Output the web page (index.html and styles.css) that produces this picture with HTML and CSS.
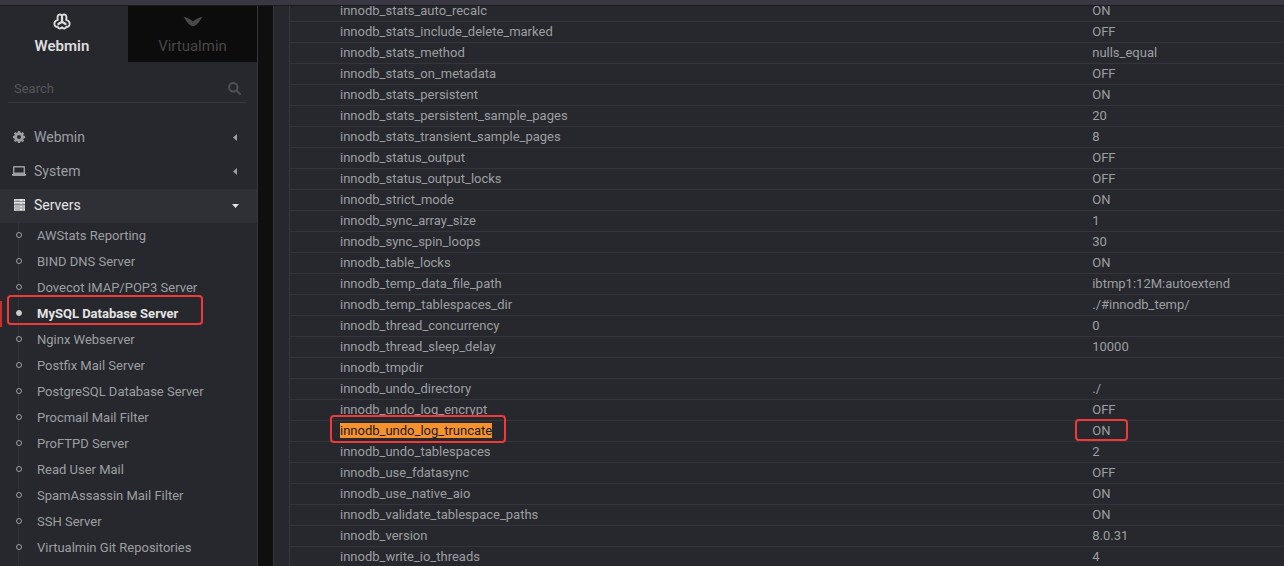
FILE: index.html
```html
<!DOCTYPE html>
<html lang="en">

<head>
  <meta charset="UTF-8">
  <meta name="viewport" content="width=device-width, initial-scale=1.0">
  <title>Webmin - MySQL Database Server</title>
  <link rel="stylesheet" href="styles.css">
</head>

<body>
  <div class="topbar"></div>
  <div class="layout">
    <aside class="sidebar">
      <div class="tabs">
        <a href="#" class="tab active">
          <svg class="tab-icon" viewBox="0 0 20 18" fill="none" stroke="currentColor" stroke-width="2" stroke-linecap="round" stroke-linejoin="round">
            <path d="M10 2.800C9 1 6 1.200 5.400 3.400C5 5 5.400 6.200 5.600 7.200C3 8 1.600 10 2 12.200C2.600 14.800 4.400 15 5.400 14.400C6 17 9 17 10 15C11 17 14 17 14.600 14.400C15.600 15 17.400 14.800 18 12.200C18.400 10 17 8 14.400 7.200C14.600 6.200 15 5 14.600 3.400C14 1.200 11 1 10 2.800Z" />
            <path stroke-width="2.400" d="M10 4V9.200M10 9.200L6.200 11.600M10 9.200L13.800 11.600" />
          </svg>
          <span>Webmin</span>
        </a>
        <a href="#" class="tab">
          <svg class="tab-icon" viewBox="0 0 20 18" fill="currentColor">
            <path d="M0 4C4 5 7 6.400 10 9C13 6.400 16 5 20 4C17.500 8.500 14.500 12.500 12 13.600Q10 14.400 8 13.600C5.500 12.500 2.500 8.500 0 4Z" />
          </svg>
          <span>Virtualmin</span>
        </a>
      </div>
      <form class="search">
        <input type="text" placeholder="Search" aria-label="Search">
        <button type="submit" aria-label="Search">
          <svg viewBox="0 0 13 13" fill="none" stroke="currentColor" stroke-width="2">
            <circle cx="5.300" cy="5.300" r="4.200" />
            <path d="M8.400 8.400L12 12" stroke-linecap="round" />
          </svg>
        </button>
      </form>
      <nav>
        <a href="#" class="nav-item">
          <svg class="nav-icon" viewBox="0 0 14 14" fill="currentColor">
            <path fill-rule="evenodd" d="M5.900 1h2.200l.3 1.600 1 .4 1.300-.9 1.400 1.400-.9 1.300.4 1 1.500.2v2.100l-1.500.3-.4 1 .9 1.300-1.400 1.400-1.300-.9-1 .4-.3 1.500H5.900l-.3-1.500-1-.4-1.300.9-1.400-1.400.9-1.300-.4-1L.9 8.100V6l1.500-.2.4-1-.9-1.300 1.400-1.400 1.300.9 1-.4zM7 5a2 2 0 1 0 0 4a2 2 0 1 0 0-4z" />
          </svg>
          <span>Webmin</span>
          <svg class="arrow" viewBox="0 0 8 8" fill="currentColor"><path d="M5 1v7L1 4.500z" /></svg>
        </a>
        <a href="#" class="nav-item">
          <svg class="nav-icon" viewBox="0 0 14 14" fill="currentColor">
            <path fill-rule="evenodd" d="M2 2h10a1 1 0 0 1 1 1v7H1V3a1 1 0 0 1 1-1zM2.400 3.400v5.200h9.200V3.400zM0 10h14v1a1 1 0 0 1-1 1H1a1 1 0 0 1-1-1z" />
          </svg>
          <span>System</span>
          <svg class="arrow" viewBox="0 0 8 8" fill="currentColor"><path d="M5 1v7L1 4.500z" /></svg>
        </a>
        <a href="#" class="nav-item open">
          <svg class="nav-icon" viewBox="0 0 14 14">
            <path fill="currentColor" d="M2 1h11v2.500H2zM2 4.100h11v2.500H2zM2 7.200h11v2.500H2zM2 10.300h11v2.500H2z" />
            <path stroke="#8a8a8e" stroke-width="0.600" d="M3 2.300h5M10 2.300h2M3 5.400h5M10 5.400h2M3 8.500h5M10 8.500h2M3 11.600h5M10 11.600h2" />
          </svg>
          <span>Servers</span>
          <svg class="arrow" viewBox="0 0 8 8" fill="currentColor"><path d="M0 3h7L3.500 7z" /></svg>
        </a>
        <ul class="submenu">
          <li><a href="#">AWStats Reporting</a></li>
          <li><a href="#">BIND DNS Server</a></li>
          <li><a href="#">Dovecot IMAP/POP3 Server</a></li>
          <li class="current"><a href="#">MySQL Database Server</a></li>
          <li><a href="#">Nginx Webserver</a></li>
          <li><a href="#">Postfix Mail Server</a></li>
          <li><a href="#">PostgreSQL Database Server</a></li>
          <li><a href="#">Procmail Mail Filter</a></li>
          <li><a href="#">ProFTPD Server</a></li>
          <li><a href="#">Read User Mail</a></li>
          <li><a href="#">SpamAssassin Mail Filter</a></li>
          <li><a href="#">SSH Server</a></li>
          <li><a href="#">Virtualmin Git Repositories</a></li>
        </ul>
      </nav>
    </aside>
    <main class="content">
      <table class="variables">
        <tbody>
          <tr><td>innodb_stats_auto_recalc</td><td>ON</td></tr>
          <tr><td>innodb_stats_include_delete_marked</td><td>OFF</td></tr>
          <tr><td>innodb_stats_method</td><td>nulls_equal</td></tr>
          <tr><td>innodb_stats_on_metadata</td><td>OFF</td></tr>
          <tr><td>innodb_stats_persistent</td><td>ON</td></tr>
          <tr><td>innodb_stats_persistent_sample_pages</td><td>20</td></tr>
          <tr><td>innodb_stats_transient_sample_pages</td><td>8</td></tr>
          <tr><td>innodb_status_output</td><td>OFF</td></tr>
          <tr><td>innodb_status_output_locks</td><td>OFF</td></tr>
          <tr><td>innodb_strict_mode</td><td>ON</td></tr>
          <tr><td>innodb_sync_array_size</td><td>1</td></tr>
          <tr><td>innodb_sync_spin_loops</td><td>30</td></tr>
          <tr><td>innodb_table_locks</td><td>ON</td></tr>
          <tr><td>innodb_temp_data_file_path</td><td>ibtmp1:12M:autoextend</td></tr>
          <tr><td>innodb_temp_tablespaces_dir</td><td>./#innodb_temp/</td></tr>
          <tr><td>innodb_thread_concurrency</td><td>0</td></tr>
          <tr><td>innodb_thread_sleep_delay</td><td>10000</td></tr>
          <tr><td>innodb_tmpdir</td><td></td></tr>
          <tr><td>innodb_undo_directory</td><td>./</td></tr>
          <tr><td>innodb_undo_log_encrypt</td><td>OFF</td></tr>
          <tr><td><span class="marked marked-name"><mark>innodb_undo_log_truncate</mark></span></td><td><span class="marked marked-value">ON</span></td></tr>
          <tr><td>innodb_undo_tablespaces</td><td>2</td></tr>
          <tr><td>innodb_use_fdatasync</td><td>OFF</td></tr>
          <tr><td>innodb_use_native_aio</td><td>ON</td></tr>
          <tr><td>innodb_validate_tablespace_paths</td><td>ON</td></tr>
          <tr><td>innodb_version</td><td>8.0.31</td></tr>
          <tr><td>innodb_write_io_threads</td><td>4</td></tr>
        </tbody>
      </table>
    </main>
  </div>
</body>

</html>
```

FILE: styles.css
```css
*,
*::before,
*::after {
  box-sizing: border-box;
}

body {
  margin: 0;
  height: 100vh;
  overflow: hidden;
  font-family: Roboto, sans-serif;
  font-size: 13px;
  color: #9c9fa1;
  background-color: #0f0f0f;
}

a {
  color: inherit;
  text-decoration: none;
}

.topbar {
  position: fixed;
  top: 0;
  left: 0;
  right: 0;
  z-index: 5;
  height: 6px;
  background-color: #393842;
  border-bottom: 1px solid #1b1b1f;
}

.layout {
  display: flex;
  gap: 15px;
  min-height: 100vh;
}

.sidebar {
  flex: none;
  width: 258px;
  padding-top: 6px;
  background-color: #27282d;
  border-right: 1px solid #37383d;
}

.tabs {
  display: grid;
  grid-template-columns: 128px 1fr;
}

.tab {
  display: flex;
  flex-direction: column;
  align-items: center;
  height: 56px;
  padding-top: 7px;
  font-size: 15px;
  line-height: 32px;
  color: #484848;
  background-color: #0c0c0c;
}

.tab.active {
  padding-right: 4px;
  font-weight: 600;
  color: #dddddd;
  background-color: #27282d;
}

.tab-icon {
  width: 20px;
  height: 18px;
}

.search {
  display: flex;
  align-items: center;
  height: 29px;
  margin: 12px 10px 18px 8px;
  padding: 0 6px;
  border-bottom: 1px solid #37383d;
}

.search input {
  flex: 1;
  min-width: 0;
  padding: 0;
  border: none;
  outline: none;
  font: inherit;
  color: #9c9fa1;
  background: none;
}

.search input::placeholder {
  color: #55565a;
}

.search button {
  display: flex;
  padding: 0;
  border: none;
  color: #505155;
  background: none;
  cursor: pointer;
}

.search svg {
  width: 13px;
  height: 13px;
}

.nav-item {
  display: flex;
  align-items: center;
  gap: 8px;
  height: 34px;
  padding: 0 17px 2px 12px;
  font-size: 14px;
}

.nav-item.open {
  color: #e4e4e4;
  background-color: #2f3036;
}

.nav-icon {
  width: 14px;
  height: 14px;
}

.arrow {
  width: 8px;
  height: 8px;
  margin-left: auto;
}

.submenu {
  position: relative;
  margin: 0;
  padding: 0;
  list-style: none;
}

/* tree line behind the bullets */
.submenu::before {
  content: "";
  position: absolute;
  top: 0;
  bottom: -26px;
  left: 18px;
  border-left: 1px solid #323338;
}

.submenu li {
  position: relative;
}

.submenu a {
  position: relative;
  display: flex;
  align-items: center;
  gap: 15px;
  height: 26px;
  padding: 0 0 2px 16px;
}

.submenu a::before {
  content: "";
  width: 6px;
  height: 6px;
  border: 1px solid #9c9fa1;
  border-radius: 50%;
  background-color: #27282d;
}

.submenu .current {
  font-weight: 700;
  color: #e4e4e4;
  box-shadow: inset 2px 0 #c9302c;
}

.submenu .current a::before {
  border-color: #cccccc;
  background-color: #cccccc;
}

.submenu .current::after,
.marked::after {
  content: "";
  position: absolute;
  border: 2px solid #f03a3a;
  border-radius: 4px;
}

.submenu .current::after {
  top: -6px;
  left: 7px;
  width: 196px;
  height: 30px;
}

.content {
  flex: 1;
  min-width: 0;
  padding: 1px 0 0 15px;
  background-color: #27282d;
  border-left: 1px solid #37383d;
}

.variables {
  width: 100%;
  table-layout: fixed;
  border-spacing: 0;
  border-left: 1px solid #37383d;
}

.variables td {
  height: 21px;
  padding: 0 0 0 50px;
  line-height: 20px;
  border-bottom: 1px solid #34353a;
}

.variables td:last-child {
  width: 20%;
  padding-left: 7px;
}

.marked {
  position: relative;
}

.marked-name::after {
  inset: -8px -14px -5px -10px;
}

.marked-value::after {
  inset: -4px -18px -3px -17px;
}

mark {
  color: #1b1b1f;
  background-color: #f6922e;
}
```
